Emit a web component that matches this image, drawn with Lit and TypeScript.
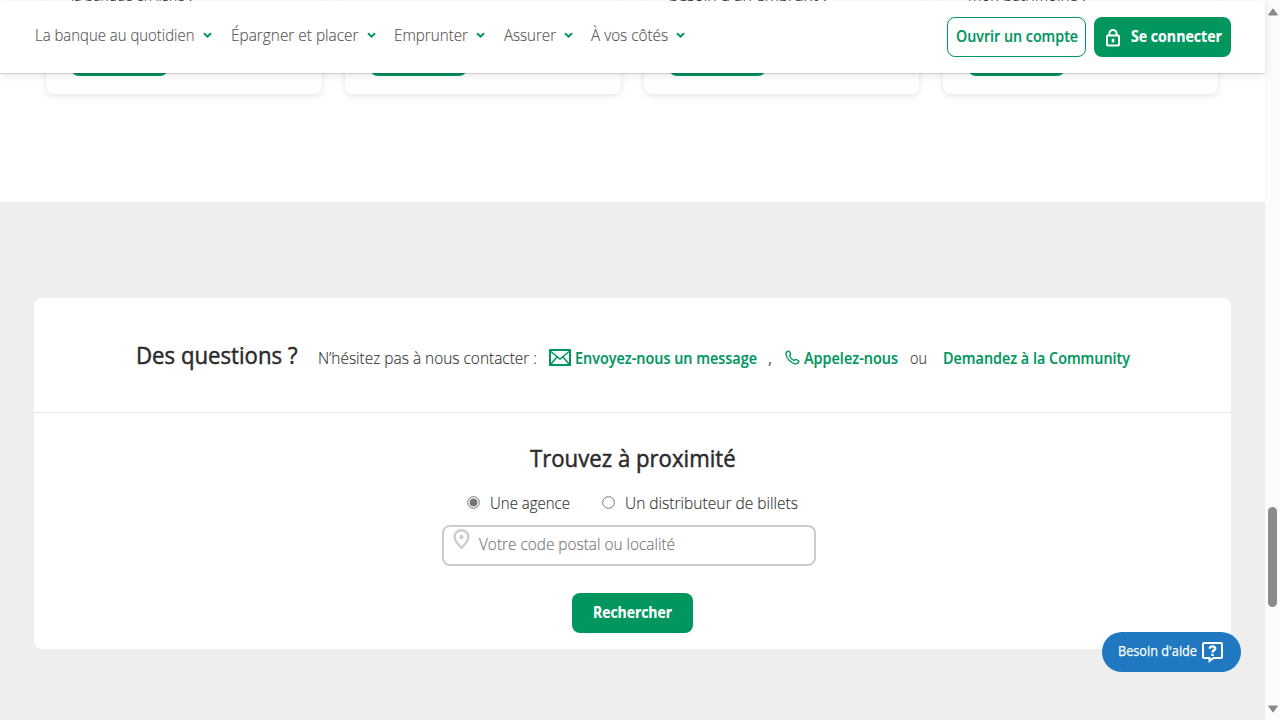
import { LitElement, html, css, svg } from "lit";
import { customElement, property } from "lit/decorators.js";

/** A line of text condensed horizontally to a given width. */
@customElement("fit-text")
class FitText extends LitElement {
  @property({ type: Number }) w = 100;
  @property() text = "";
  static styles = css`
    :host { display: block; flex: none; white-space: pre; text-align: left; }
    .line { display: inline-block; transform-origin: 0 50%; vertical-align: top; }
  `;
  render() {
    return html`<span class="line">${this.text}</span>`;
  }
  updated() {
    const line = this.renderRoot.querySelector(".line") as HTMLElement;
    this.style.width = `${this.w}px`;
    const natural = line.getBoundingClientRect().width;
    if (natural) line.style.transform = `scaleX(${this.w / natural})`;
    line.style.marginRight = `${this.w - natural}px`;
  }
}

const chevron = svg`<svg class="chev" width="9" height="7" viewBox="0 0 9 7"><path d="M1 1.2 4.5 4.7 8 1.2" fill="none" stroke="#00965e" stroke-width="2"/></svg>`;

const menu = [
  { label: "La banque au quotidien", w: 159.5, gap: 19.5 },
  { label: "Épargner et placer", w: 127.5, gap: 18.5 },
  { label: "Emprunter", w: 74, gap: 18.5 },
  { label: "Assurer", w: 52, gap: 18.5 },
  { label: "À vos côtés", w: 77, gap: 0 },
];

const cards = [
  { text: "la banque en ligne ?", w: 123 },
  { text: "", w: 0 },
  { text: "besoin d'un emprunt ?", w: 160 },
  { text: "mon patrimoine ?", w: 120 },
];

@customElement("app-root")
class AppRoot extends LitElement {
  static styles = css`
    :host { display: flex; position: relative; width: 1280px; height: 720px; overflow: hidden;
      font: 300 17px/24px "Open Sans", "Noto Sans", sans-serif; color: #333; background: #fff;
      -webkit-text-stroke: .15px currentColor; }
    * { box-sizing: border-box; }
    svg { display: block; flex: none; }
    .page { width: 1265px; height: 720px; display: flex; flex-direction: column; overflow: hidden; }
    .offers { height: 202px; flex: none; display: grid; grid-template-columns: repeat(4, 275.6px);
      column-gap: 23.2px; padding-left: 46.2px; align-items: start; }
    .offer { height: 94px; border-radius: 0 0 8px 8px; box-shadow: 0 2px 7px rgba(0,0,0,.11);
      padding-left: 25px; display: flex; flex-direction: column; justify-content: space-between;
      padding-bottom: 18px; }
    .offer fit-text { height: 24px; margin-top: -17px; }
    .offer .cta { width: 97px; height: 40px; border-radius: 8px; background: #00965e; }
    .header { position: absolute; left: 0; top: 1px; width: 1265px; height: 72px; background: #fff;
      box-shadow: 0 1px 1px rgba(0,0,0,.12), 0 2px 9px rgba(0,0,0,.1); display: flex;
      justify-content: space-between; padding: 0 34.5px 0 35px; }
    .menu { display: flex; padding-top: 22px; color: #555; }
    .entry { display: flex; }
    .chev { margin: 9px 0 0 8px; }
    .actions { display: flex; gap: 8px; padding-top: 15.5px; font-weight: 700; font-size: 16px; }
    .open { width: 139px; height: 40.5px; border: 1px solid #00965e; border-radius: 8px; color: #00965e;
      padding: 6px 0 0 8px; font-weight: 600; }
    .login { width: 136.5px; height: 40.5px; border-radius: 8px; background: #00965e; color: #fff;
      padding: 7px 0 0 12px; display: flex; }
    .login fit-text { margin-left: 11px; }
    .login svg { margin-top: 5px; }
    .help-zone { flex: 1; background: #eee; padding: 96px 34px 0 34.4px; }
    .panel { height: 351px; background: #fff; border-radius: 8px; }
    .contact { height: 115px; border-bottom: 1px solid #e8e8e8; display: flex; padding: 48px 0 0 101.5px; }
    h2 { margin: 0; font-size: 24px; line-height: 32px; font-weight: 400; color: #2b2b2b;
      -webkit-text-stroke: .5px currentColor; }
    .contact h2 { margin-top: -7px; }
    .intro { margin-left: 20.5px; }
    .link { display: flex; gap: 4px; color: #00965e; font-weight: 600; font-size: 16px; }
    .mail { margin-left: 12px; }
    .mail svg { margin-top: 3px; }
    .phone { margin-left: 13px; }
    .phone svg { margin-top: 4px; }
    .comma { margin-left: 11px; }
    .or { margin-left: 12px; }
    .community { margin-left: 16px; }
    .search { display: flex; flex-direction: column; align-items: center; padding-top: 29px; }
    .choices { display: flex; margin: 17px 0 0 .4px; }
    .choice { display: flex; gap: 10px; }
    .choice + .choice { margin-left: 32px; }
    .radio { margin-top: 5px; }
    .field { width: 374px; height: 41px; margin: 10px 8px 0 0; border: 2px solid #ccc; border-radius: 8px;
      display: flex; padding: 2px 0 0 9px; color: #757575; }
    .field fit-text { margin: 3px 0 0 9px; }
    .submit { width: 121px; height: 40px; margin-top: 27px; border-radius: 8px; background: #00965e;
      color: #fff; font-weight: 700; font-size: 16px; padding: 7px 0 0 21px; }
    .assist { position: absolute; left: 1102px; top: 632px; width: 139px; height: 40px; border-radius: 20px;
      background: #2078c0; color: #fff; display: flex; gap: 5px; padding: 7px 0 0 16px; font-size: 14px; font-weight: 400;
      -webkit-text-stroke: .25px currentColor; }
    .assist svg { margin-top: 3px; }
    .scroll { width: 15px; height: 720px; background: #fcfcfc; display: flex; flex-direction: column;
      align-items: center; padding: 8px 0 7px; }
    .thumb { width: 9px; height: 100px; border-radius: 5px; background: #8b8b8b; margin: 491px 0 auto; }
  `;

  render() {
    return html`
      <div class="page">
        <section class="offers">
          ${cards.map((c) => html`<article class="offer"><fit-text .w=${c.w} .text=${c.text}></fit-text><div class="cta"></div></article>`)}
        </section>
        <section class="help-zone">
          <div class="panel">
            <div class="contact">
              <h2><fit-text .w=${161.5} .text=${"Des questions ?"}></fit-text></h2>
              <fit-text class="intro" .w=${219} .text=${"N’hésitez pas à nous contacter :"}></fit-text>
              <div class="link mail">
                <svg width="22" height="17" viewBox="0 0 22 17" fill="none" stroke="#00965e"><rect x="1" y="1" width="20" height="15" stroke-width="2"/><path d="M2 2.5 11 10 20 2.5M2 15 8 8M20 15 14 8" stroke-width="1.5"/></svg>
                <fit-text .w=${182} .text=${"Envoyez-nous un message"}></fit-text>
              </div>
              <fit-text class="comma" .w=${4} .text=${","}></fit-text>
              <div class="link phone">
                <svg width="15" height="15" viewBox="0 0 15 15" fill="none" stroke="#00965e" stroke-width="1.3" stroke-linejoin="round"><path d="M3.3 1.2C1.5 1.6 .8 3 1.1 4.8 1.9 8.9 5.9 13.1 10 13.8c1.8.3 3.1-.4 3.8-2.1.2-.4 0-.8-.4-1l-2.3-1.3c-.4-.2-.8-.1-1.1.2l-.9 1C7.3 9.8 5.3 7.9 4.4 5.8l.9-.8c.4-.3.5-.7.3-1.1L4.4 1.6c-.2-.4-.6-.5-1.1-.4Z"/></svg>
                <fit-text .w=${94} .text=${"Appelez-nous"}></fit-text>
              </div>
              <fit-text class="or" .w=${17} .text=${"ou"}></fit-text>
              <div class="link community"><fit-text .w=${187} .text=${"Demandez à la Community"}></fit-text></div>
            </div>
            <div class="search">
              <h2><fit-text .w=${205.6} .text=${"Trouvez à proximité"}></fit-text></h2>
              <div class="choices">
                <div class="choice">
                  <svg class="radio" width="13" height="13" viewBox="0 0 13 13"><circle cx="6.5" cy="6.5" r="5.8" fill="#fff" stroke="#757575"/><circle cx="6.5" cy="6.5" r="3.9" fill="#757575"/></svg>
                  <fit-text .w=${80} .text=${"Une agence"}></fit-text>
                </div>
                <div class="choice">
                  <svg class="radio" width="13" height="13" viewBox="0 0 13 13"><circle cx="6.5" cy="6.5" r="5.8" fill="#fff" stroke="#757575"/></svg>
                  <fit-text .w=${173} .text=${"Un distributeur de billets"}></fit-text>
                </div>
              </div>
              <div class="field">
                <svg width="17" height="21" viewBox="0 0 17 21"><path d="M8.5 1.2c4 0 6.9 2.9 6.9 6.6 0 4-2.9 7.4-6.9 11-4-3.6-6.9-7-6.9-11 0-3.7 2.9-6.6 6.9-6.6Z" fill="none" stroke="#ccc" stroke-width="2.4"/><circle cx="8.5" cy="8" r="2.2" fill="#ccc"/></svg>
                <fit-text .w=${196} .text=${"Votre code postal ou localité"}></fit-text>
              </div>
              <div class="submit"><fit-text .w=${79} .text=${"Rechercher"}></fit-text></div>
            </div>
          </div>
        </section>
      </div>
      <div class="scroll">
        <svg width="10" height="8" viewBox="0 0 10 8"><path d="M5 .8 9.4 7H.6Z" fill="#8b8b8b" stroke="#8b8b8b" stroke-linejoin="round"/></svg>
        <div class="thumb"></div>
        <svg width="10" height="8" viewBox="0 0 10 8"><path d="M5 7.2 9.4 1H.6Z" fill="#8b8b8b" stroke="#8b8b8b" stroke-linejoin="round"/></svg>
      </div>
      <header class="header">
        <nav class="menu">
          ${menu.map((m) => html`<div class="entry"><fit-text .w=${m.w} .text=${m.label}></fit-text>${chevron}<span style="width:${m.gap}px"></span></div>`)}
        </nav>
        <div class="actions">
          <div class="open"><fit-text .w=${122} .text=${"Ouvrir un compte"}></fit-text></div>
          <div class="login">
            <svg width="14" height="18" viewBox="0 0 14 18" fill="none" stroke="#fff" stroke-width="2"><rect x="1" y="6.4" width="12" height="10.2" rx="1"/><path d="M3.4 6.4V4.6a3.6 3.6 0 0 1 7.2 0v1.8"/><path d="M7 9.8v3.6" stroke-width="2.6"/></svg>
            <fit-text .w=${91} .text=${"Se connecter"}></fit-text>
          </div>
        </div>
      </header>
      <div class="assist">
        <fit-text .w=${79} .text=${"Besoin d'aide"}></fit-text>
        <svg width="21" height="21" viewBox="0 0 21 21" fill="none" stroke="#fff" stroke-width="2"><path d="M2 1h17q1 0 1 1v13q0 1-1 1h-7.5L7.5 19v-3H2q-1 0-1-1V2q0-1 1-1Z"/><path d="M7.8 6.7c0-3 5.4-3 5.4-.2 0 1.9-2.7 1.8-2.7 4" stroke-width="2.4"/><path d="M10.5 11.8v2.2" stroke-width="2.4"/></svg>
      </div>
    `;
  }
}
